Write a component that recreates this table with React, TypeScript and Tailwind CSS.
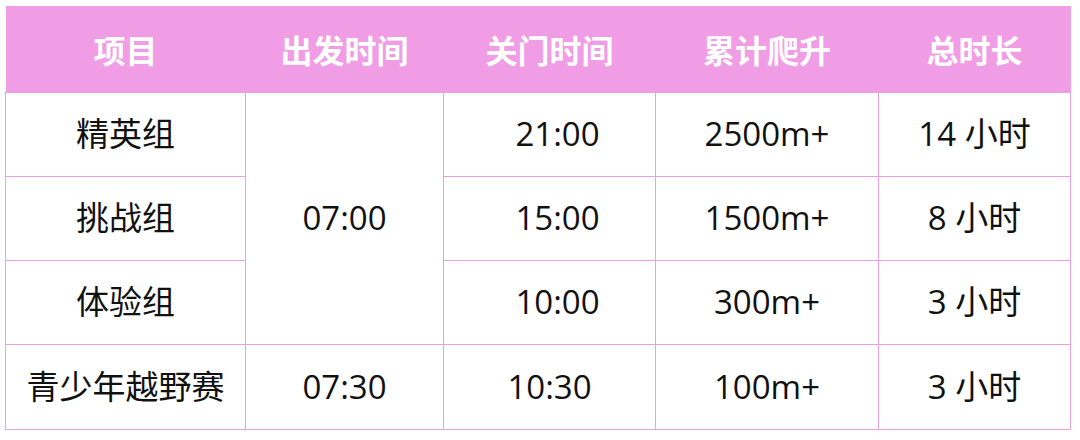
const rows = [
  { name: "精英组", close: "21:00", climb: "2500m+", total: "14 小时" },
  { name: "挑战组", close: "15:00", climb: "1500m+", total: "8 小时" },
  { name: "体验组", close: "10:00", climb: "300m+", total: "3 小时" },
];

const td = "border border-[#e8a0e0] text-center align-middle";

export default function App() {
  return (
    <div className="w-[1080px] h-[440px] bg-white pt-[6px] pl-[5px] font-['Segoe_UI','Open_Sans','Noto_Sans_CJK_SC',sans-serif] text-[33px] text-[#111]">
      <table className="border-collapse table-fixed w-[1065px]">
        <colgroup>
          <col className="w-[240px]" />
          <col className="w-[198px]" />
          <col className="w-[212px]" />
          <col className="w-[223px]" />
          <col className="w-[192px]" />
        </colgroup>
        <thead>
          <tr className="h-[86px] bg-[#f09de5] text-white font-bold text-[32px]">
            <th className="font-['Noto_Sans_CJK_SC',sans-serif]">项目</th>
            <th className="font-['Noto_Sans_CJK_SC',sans-serif]">出发时间</th>
            <th className="font-['Noto_Sans_CJK_SC',sans-serif]">关门时间</th>
            <th className="font-['Noto_Sans_CJK_SC',sans-serif]">累计爬升</th>
            <th className="font-['Noto_Sans_CJK_SC',sans-serif]">总时长</th>
          </tr>
        </thead>
        <tbody>
          {rows.map((r, i) => (
            <tr key={r.name} className="h-[84px]">
              <td className={td}>{r.name}</td>
              {i === 0 && (
                <td rowSpan={3} className={td}>
                  07:00
                </td>
              )}
              <td className={`${td} pl-4`}>{r.close}</td>
              <td className={td}>{r.climb}</td>
              <td className={td}>{r.total}</td>
            </tr>
          ))}
          <tr className="h-[85px]">
            <td className={td}>青少年越野赛</td>
            <td className={td}>07:30</td>
            <td className={td}>10:30</td>
            <td className={td}>100m+</td>
            <td className={td}>3 小时</td>
          </tr>
        </tbody>
      </table>
    </div>
  );
}
